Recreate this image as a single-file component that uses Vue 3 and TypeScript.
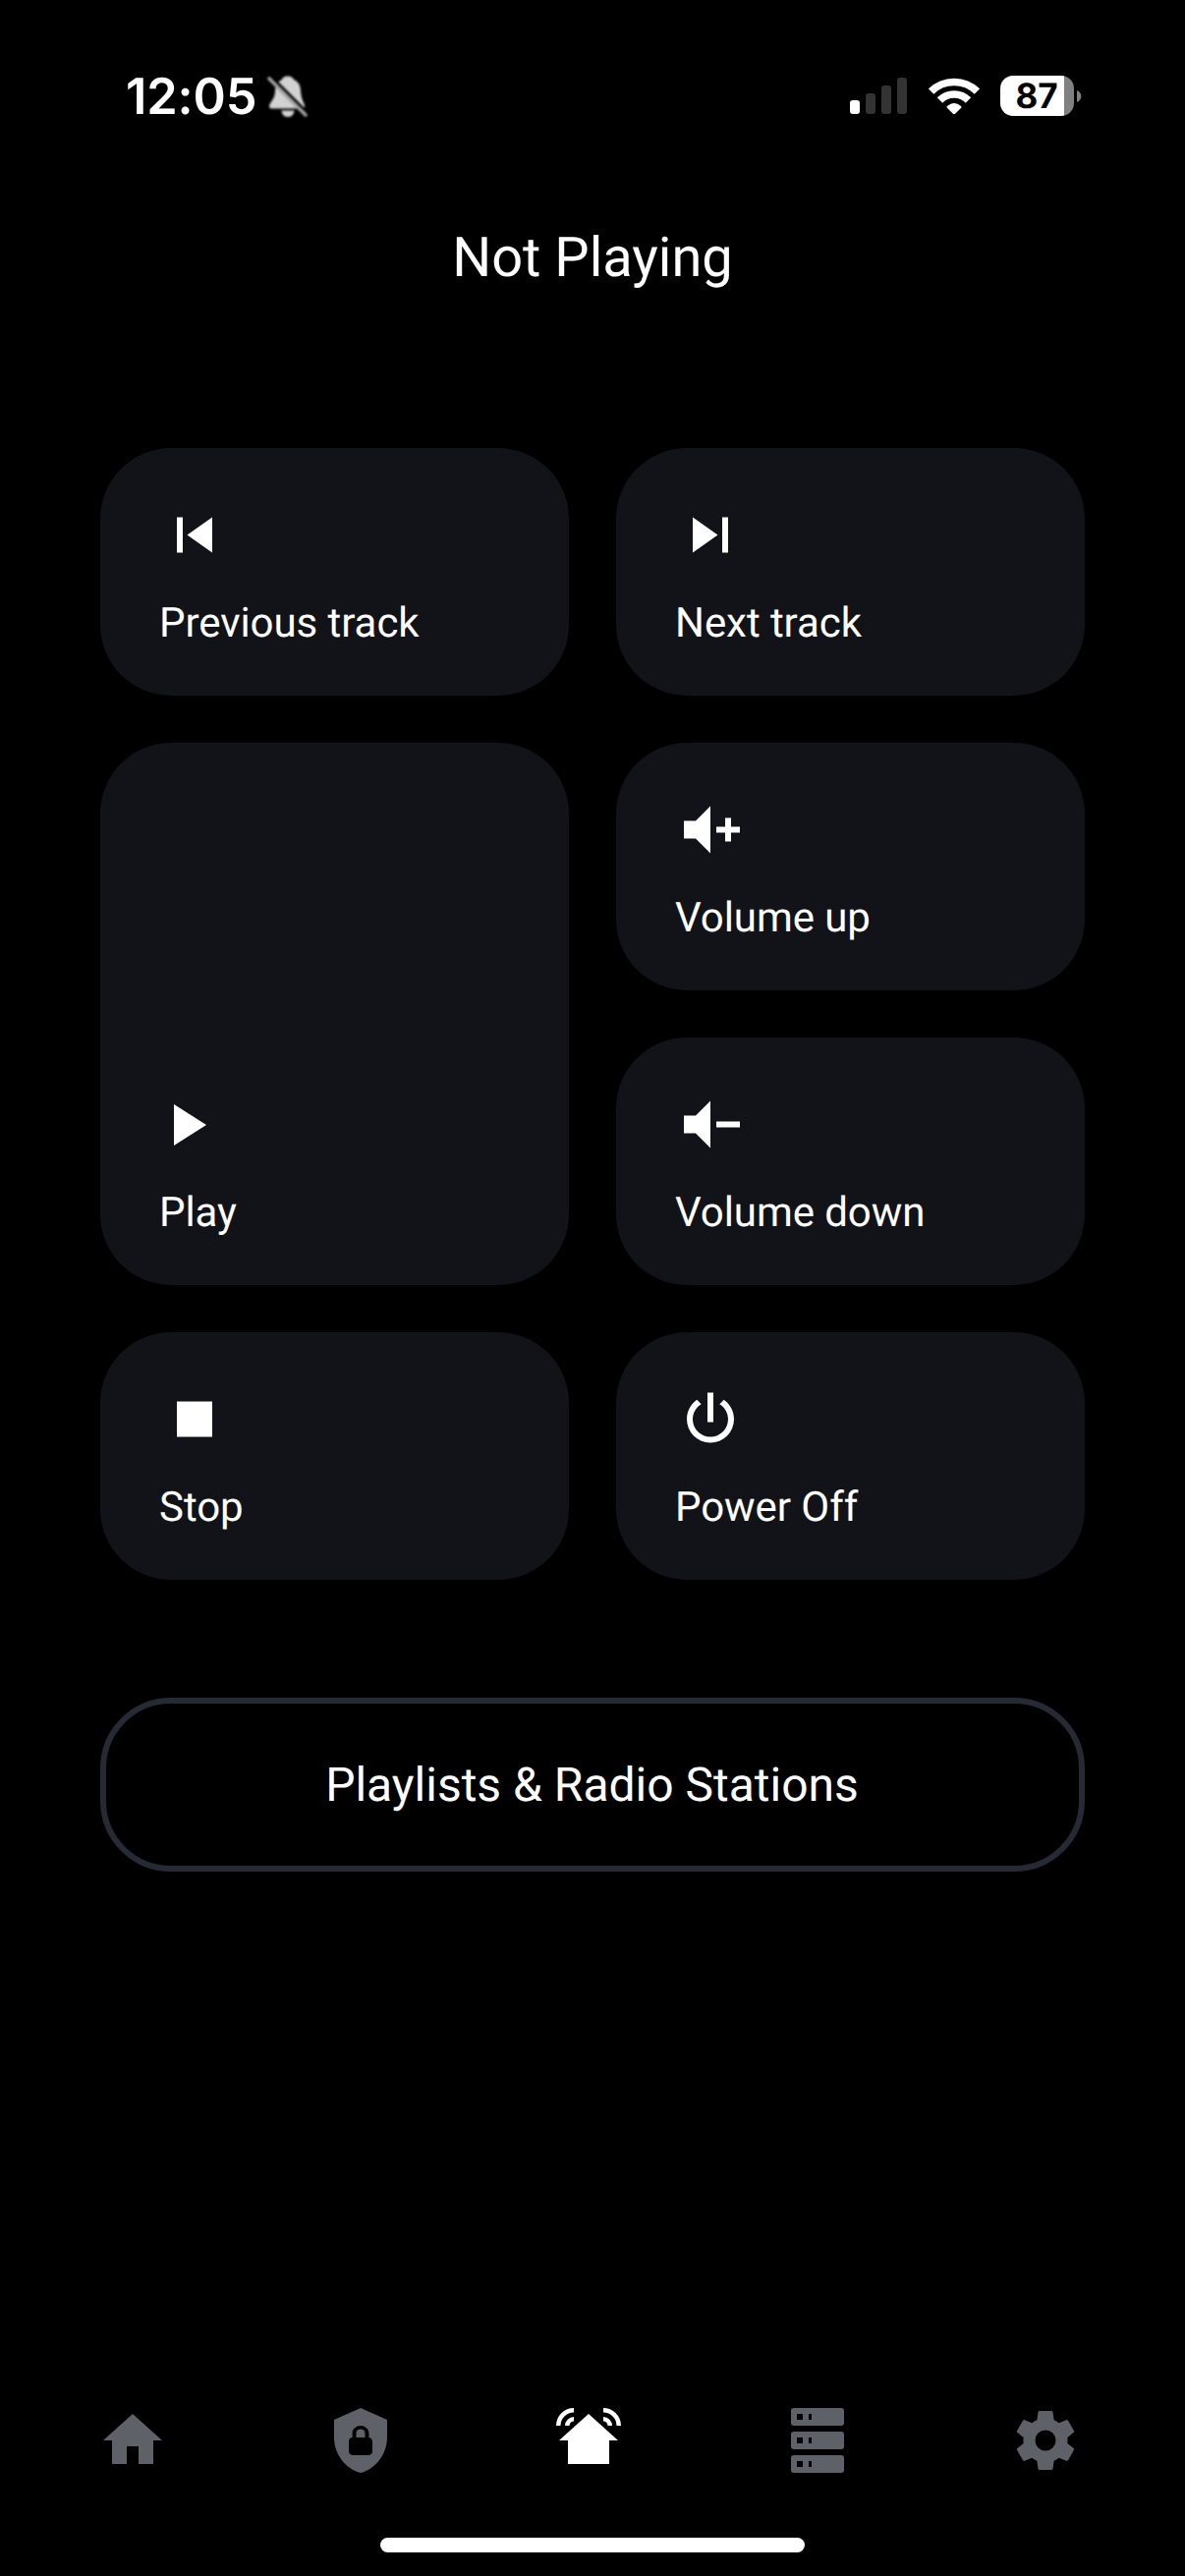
<script setup lang="ts">
interface Control {
  id: string
  label: string
  path: string
  tall?: boolean
}

interface Tab {
  id: string
  path: string
  active?: boolean
}

const speaker = 'M3,9H7L12,4V20L7,15H3V9'

const controls: Control[] = [
  { id: 'previous', label: 'Previous track', path: 'M6,18V6H8V18H6M9.5,12L18,6V18L9.5,12Z' },
  { id: 'next', label: 'Next track', path: 'M16,18H18V6H16M6,18L14.5,12L6,6V18Z' },
  { id: 'play', label: 'Play', path: 'M5,5.14V19.14L16,12.14L5,5.14Z', tall: true },
  { id: 'volume-up', label: 'Volume up', path: speaker + 'M14,11H17V8H19V11H22V13H19V16H17V13H14V11Z' },
  { id: 'volume-down', label: 'Volume down', path: speaker + 'M14,11H22V13H14V11Z' },
  { id: 'stop', label: 'Stop', path: 'M18,18H6V6H18V18Z' },
  {
    id: 'power',
    label: 'Power Off',
    path: 'M16.56,5.44L15.11,6.89C16.84,7.94 18,9.83 18,12A6,6 0 0,1 12,18A6,6 0 0,1 6,12C6,9.83 7.16,7.94 8.88,6.88L7.44,5.44C5.36,6.88 4,9.28 4,12A8,8 0 0,0 12,20A8,8 0 0,0 20,12C20,9.28 18.64,6.88 16.56,5.44M13,3H11V13H13',
  },
]

const tabs: Tab[] = [
  { id: 'home', path: 'M10,20V14H14V20H19V12H22L12,3L2,12H5V20H10Z' },
  {
    id: 'security',
    path: 'M12,1L3,5V11C3,16.55 6.84,21.74 12,23C17.16,21.74 21,16.55 21,11V5L12,1M12,7C13.4,7 14.8,8.1 14.8,9.5V11C15.4,11 16,11.6 16,12.3V15.8C16,16.4 15.4,17 14.7,17H9.2C8.6,17 8,16.4 8,15.7V12.2C8,11.6 8.6,11 9.2,11V9.5C9.2,8.1 10.6,7 12,7M12,8.2C11.2,8.2 10.5,8.7 10.5,9.5V11H13.5V9.5C13.5,8.7 12.8,8.2 12,8.2Z',
  },
  {
    id: 'automation',
    active: true,
    path: 'M12,3L2,12H5V20H19V12H22L12,3ZM1,7A6,6 0 0,1 7,1V2.5A4.5,4.5 0 0,0 2.5,7H1ZM4,7A3,3 0 0,1 7,4V5.5A1.5,1.5 0 0,0 5.5,7H4ZM23,7A6,6 0 0,0 17,1V2.5A4.5,4.5 0 0,1 21.5,7H23ZM20,7A3,3 0 0,0 17,4V5.5A1.5,1.5 0 0,1 18.5,7H20Z',
  },
  {
    id: 'server',
    path: 'M4,1H20A1,1 0 0,1 21,2V6A1,1 0 0,1 20,7H4A1,1 0 0,1 3,6V2A1,1 0 0,1 4,1M4,9H20A1,1 0 0,1 21,10V14A1,1 0 0,1 20,15H4A1,1 0 0,1 3,14V10A1,1 0 0,1 4,9M4,17H20A1,1 0 0,1 21,18V22A1,1 0 0,1 20,23H4A1,1 0 0,1 3,22V18A1,1 0 0,1 4,17M9,5H10V3H9V5M9,13H10V11H9V13M9,21H10V19H9V21M5,3V5H7V3H5M5,11V13H7V11H5M5,19V21H7V19H5Z',
  },
  {
    id: 'settings',
    path: 'M12,15.5A3.5,3.5 0 0,1 8.5,12A3.5,3.5 0 0,1 12,8.5A3.5,3.5 0 0,1 15.5,12A3.5,3.5 0 0,1 12,15.5M19.43,12.97C19.47,12.65 19.5,12.33 19.5,12C19.5,11.67 19.47,11.34 19.43,11L21.54,9.37C21.73,9.22 21.78,8.95 21.66,8.73L19.66,5.27C19.54,5.05 19.27,4.96 19.05,5.05L16.56,6.05C16.04,5.66 15.5,5.32 14.87,5.07L14.5,2.42C14.46,2.18 14.25,2 14,2H10C9.75,2 9.54,2.18 9.5,2.42L9.13,5.07C8.5,5.32 7.96,5.66 7.44,6.05L4.95,5.05C4.73,4.96 4.46,5.05 4.34,5.27L2.34,8.73C2.21,8.95 2.27,9.22 2.46,9.37L4.57,11C4.53,11.34 4.5,11.67 4.5,12C4.5,12.33 4.53,12.65 4.57,12.97L2.46,14.63C2.27,14.78 2.21,15.05 2.34,15.27L4.34,18.73C4.46,18.95 4.73,19.03 4.95,18.95L7.44,17.94C7.96,18.34 8.5,18.68 9.13,18.93L9.5,21.58C9.54,21.82 9.75,22 10,22H14C14.25,22 14.46,21.82 14.5,21.58L14.87,18.93C15.5,18.67 16.04,18.34 16.56,17.94L19.05,18.95C19.27,19.03 19.54,18.95 19.66,18.73L21.66,15.27C21.78,15.05 21.73,14.78 21.54,14.63L19.43,12.97Z',
  },
]
</script>

<template>
  <div class="screen">
    <header class="status">
      <div class="status-left">
        <span class="time">12:05</span>
        <svg class="bell" width="44" height="48" viewBox="0 0 44 48">
          <defs>
            <mask id="bell-cut" maskUnits="userSpaceOnUse" x="0" y="0" width="44" height="48">
              <rect width="44" height="48" fill="#fff" />
              <path d="M3 2.5L44 43.5" stroke="#000" stroke-width="3.6" />
            </mask>
          </defs>
          <g fill="#d2d2d2" mask="url(#bell-cut)">
            <path d="M22 3.500C18.500 3.500 16.500 5 16 7C11.500 9 9 13 9 19C8.700 27 4 29 3 34Q3 36.500 5 36.500H37Q39.500 36.500 39 33C37.500 29 35.500 26 35 19C35 13 32.500 9 28 7C27 5 25 3.500 22 3.500Z" />
            <path d="M15.500 38.500H28.500C28 43 25.500 45 22 45C18.500 45 16 43 15.500 38.500Z" />
          </g>
          <path d="M3 6L40 43" stroke="#a2a2a2" stroke-width="3.6" stroke-linecap="round" />
        </svg>
      </div>
      <div class="status-right">
        <svg class="signal" width="58" height="37" viewBox="0 0 58 37">
          <rect x="0" y="23" width="10" height="14" rx="3" fill="#fff" />
          <rect x="16" y="16" width="10" height="21" rx="3" fill="#333" />
          <rect x="32" y="8" width="10" height="29" rx="3" fill="#333" />
          <rect x="48" y="0" width="10" height="37" rx="3" fill="#333" />
        </svg>
        <svg class="wifi" width="52" height="38" viewBox="0 0 52 38">
          <g fill="none" stroke="#fff" stroke-width="7.6">
            <path d="M2.600 14.100A33.400 33.400 0 0 1 49.400 14.100" />
            <path d="M11.500 23A20.500 20.500 0 0 1 40.500 23" />
          </g>
          <path d="M26 37.300Q25.300 37.300 24.600 36.600L18.800 30.800Q18 29.800 19 29Q26 23 33 29Q34 29.800 33.200 30.800L27.400 36.600Q26.700 37.300 26 37.300Z" fill="#fff" />
        </svg>
        <div class="battery">
          <div class="cell"><span class="level">87</span></div>
          <svg width="5" height="12" viewBox="0 0 5 12"><path d="M0 0Q4.300 1.800 4.300 6T0 12Z" fill="#808080" /></svg>
        </div>
      </div>
    </header>

    <h1 class="title">Not Playing</h1>

    <main class="controls">
      <button v-for="c in controls" :key="c.id" class="card" :class="{ tall: c.tall }">
        <svg class="icon" viewBox="0 -0.1667 24 24"><path :d="c.path" /></svg>
        <span class="label">{{ c.label }}</span>
      </button>
    </main>

    <button class="playlists"><span>Playlists &amp; Radio Stations</span></button>

    <nav class="tabs">
      <svg v-for="t in tabs" :key="t.id" class="tab" :class="{ active: t.active }" viewBox="0 0 24 24">
        <path :d="t.path" />
      </svg>
    </nav>
    <div class="home-indicator"></div>
  </div>
</template>

<style>
html,
body {
  background: #000;
}
</style>

<style scoped>
.screen {
  box-sizing: border-box;
  width: 1206px;
  height: 2622px;
  display: flex;
  flex-direction: column;
  overflow: hidden;
  background: #000;
  color: #fff;
  font-family: Roboto, "Liberation Sans", sans-serif;
  text-rendering: geometricPrecision;
}
.screen svg {
  display: block;
  flex: none;
}
button {
  margin: 0;
  padding: 0;
  border: 0;
  color: inherit;
  font: inherit;
  text-align: left;
  text-rendering: inherit;
}
.status {
  box-sizing: border-box;
  height: 195px;
  padding: 0 105px 0 128px;
  display: flex;
  justify-content: space-between;
  align-items: center;
  font-family: Inter, sans-serif;
}
.status-left,
.status-right,
.battery {
  display: flex;
  align-items: center;
}
.time {
  width: 143px;
  padding-top: 2px;
  font-size: 50.5px;
  line-height: 60px;
  font-weight: 600;
  letter-spacing: -0.1px;
  white-space: nowrap;
}
.bell {
  filter: blur(1.2px);
}
.signal {
  margin-right: 22px;
}
.wifi {
  margin-right: 21px;
}
.battery {
  gap: 3px;
}
.cell {
  width: 75px;
  height: 41px;
  border-radius: 13px;
  background: linear-gradient(90deg, #fff 65px, #808080 65px);
  color: #000;
  display: flex;
  align-items: center;
}
.level {
  width: 74px;
  padding-top: 1px;
  text-align: center;
  font-size: 35px;
  line-height: 41px;
  font-weight: 700;
}
.title {
  margin: 34px 0 0;
  height: 66px;
  font-size: 56px;
  line-height: 66px;
  font-weight: 400;
  text-align: center;
}
.controls {
  margin: 161px 102px 0;
  display: grid;
  grid-template-columns: 1fr 1fr;
  grid-auto-rows: 252px;
  gap: 48px;
}
.card {
  box-sizing: border-box;
  padding: 0 60px 43px;
  border-radius: 72px;
  background: #121318;
  display: flex;
  flex-direction: column;
  justify-content: flex-end;
  gap: 25px;
}
.tall {
  grid-row: span 2;
}
.icon {
  width: 72px;
  height: 72px;
  fill: #fff;
}
.label {
  font-size: 42px;
  line-height: 60px;
  letter-spacing: -0.06px;
  white-space: nowrap;
}
.playlists {
  box-sizing: border-box;
  height: 177px;
  margin: 120px 102px 0;
  padding-right: 1px;
  border: 6px solid #252a34;
  border-radius: 72px;
  background: transparent;
  display: flex;
  justify-content: center;
  align-items: center;
  font-size: 48px;
  line-height: 60px;
}
.tabs {
  margin-top: auto;
  padding: 0 99px;
  display: flex;
  gap: 160px;
}
.tab {
  width: 72px;
  height: 72px;
  fill: #5f6169;
}
.tab:nth-child(4) {
  margin-left: 1px;
}
.tab.active {
  fill: #fff;
}
.home-indicator {
  width: 432px;
  height: 15px;
  margin: 63px auto 24px;
  flex: none;
  border-radius: 7.5px;
  background: #fff;
}
</style>
